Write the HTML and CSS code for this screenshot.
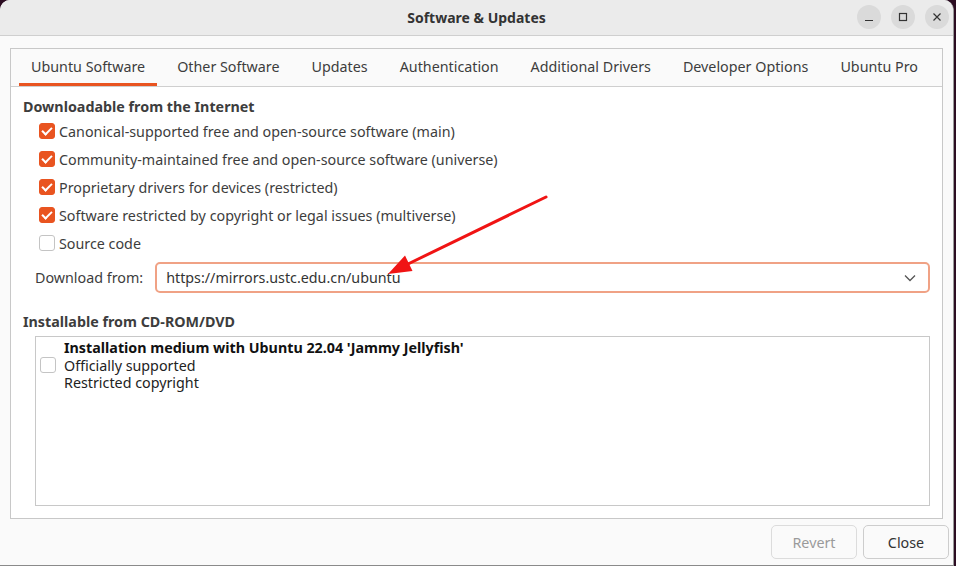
FILE: index.html
```html
<!DOCTYPE html>
<html>
<head>
<meta charset="utf-8">
<link rel="stylesheet" href="styles.css">
</head>
<body>
<div class="window">
  <header class="titlebar">
    <div class="title">Software &amp; Updates</div>
    <div class="wbtns">
      <span class="wbtn"><svg width="10" height="10" viewBox="0 0 10 10"><path d="M1 8.5h8" stroke="#333" stroke-width="1.2"/></svg></span>
      <span class="wbtn"><svg width="10" height="10" viewBox="0 0 10 10"><rect x="1.5" y="1.5" width="7" height="7" fill="none" stroke="#333" stroke-width="1.2"/></svg></span>
      <span class="wbtn"><svg width="10" height="10" viewBox="0 0 10 10"><path d="M1.5 1.5l7 7M8.5 1.5l-7 7" stroke="#333" stroke-width="1.2"/></svg></span>
    </div>
  </header>
  <main class="body">
    <section class="notebook">
      <nav class="tabs">
        <span class="tab active">Ubuntu Software</span>
        <span class="tab">Other Software</span>
        <span class="tab">Updates</span>
        <span class="tab">Authentication</span>
        <span class="tab">Additional Drivers</span>
        <span class="tab">Developer Options</span>
        <span class="tab">Ubuntu Pro</span>
      </nav>
      <div class="page">
        <h3 class="heading">Downloadable from the Internet</h3>
        <div class="checks">
          <label class="check"><span class="box on"></span>Canonical-supported free and open-source software (main)</label>
          <label class="check"><span class="box on"></span>Community-maintained free and open-source software (universe)</label>
          <label class="check"><span class="box on"></span>Proprietary drivers for devices (restricted)</label>
          <label class="check"><span class="box on"></span>Software restricted by copyright or legal issues (multiverse)</label>
          <label class="check"><span class="box"></span>Source code</label>
        </div>
        <div class="download">
          <span class="dl-label">Download from:</span>
          <div class="combo">
            <span>https://mirrors.ustc.edu.cn/ubuntu</span>
            <svg width="12" height="8" viewBox="0 0 12 8"><path d="M1 1.5l5 5 5-5" fill="none" stroke="#555" stroke-width="1.3"/></svg>
          </div>
        </div>
        <h3 class="heading cd">Installable from CD-ROM/DVD</h3>
        <div class="listbox">
          <div class="cdrow">
            <span class="box"></span>
            <div class="cdtext">
              <strong>Installation medium with Ubuntu 22.04 'Jammy Jellyfish'</strong>
              <span>Officially supported</span>
              <span>Restricted copyright</span>
            </div>
          </div>
        </div>
      </div>
    </section>
    <footer class="actions">
      <button class="btn disabled">Revert</button>
      <button class="btn">Close</button>
    </footer>
  </main>
  <svg class="arrow" width="956" height="566" viewBox="0 0 956 566">
    <line x1="546" y1="197" x2="408" y2="264" stroke="#f01414" stroke-width="3" stroke-linecap="round"/>
    <polygon points="388,274 405,255.5 412.5,271" fill="#f01414"/>
  </svg>
</div>
</body>
</html>
```
FILE: styles.css
```css
html, body {
  margin: 0;
  padding: 0;
  background: #2c0d22;
}
body {
  font-family: "Noto Sans", "DejaVu Sans", sans-serif;
  font-size: 14.3px;
  color: #3d3d3d;
  width: 956px;
  height: 566px;
  overflow: hidden;
  position: relative;
}
.window {
  width: 953px;
  height: 565px;
  background: #fafafa;
  border-right: 1px solid #9a9a9a;
  border-bottom: 1px solid #8a8a8a;
  border-radius: 10px 10px 0 0;
  overflow: hidden;
  display: flex;
  flex-direction: column;
}
.titlebar {
  height: 35px;
  background: #ebebeb;
  border-bottom: 1px solid #cfcfcf;
  position: relative;
  display: flex;
  align-items: center;
  justify-content: center;
  flex-shrink: 0;
}
.title {
  font-weight: bold;
  color: #333;
  font-size: 14px;
}
.wbtns {
  position: absolute;
  right: 4px;
  top: 5px;
  display: flex;
  gap: 10px;
}
.wbtn {
  width: 24px;
  height: 24px;
  border-radius: 50%;
  background: #dadada;
  display: flex;
  align-items: center;
  justify-content: center;
}
.body {
  flex: 1;
  display: flex;
  flex-direction: column;
  padding: 12px 10px 0 10px;
}
.notebook {
  height: 469px;
  width: 931px;
  border: 1px solid #c8c8c8;
  background: #fff;
  display: flex;
  flex-direction: column;
}
.tabs {
  height: 37px;
  border-bottom: 1px solid #cfcfcf;
  background: #fafafa;
  display: flex;
  padding-left: 4px;
}
.tab {
  margin: 0 4px;
  padding: 1px 12px 0 12px;
  display: flex;
  align-items: center;
  color: #3d3d3d;
  border-bottom: 3px solid transparent;
}
.tab.active {
  border-bottom-color: #e95420;
}
.page {
  padding: 10px 12px 0 12px;
  display: flex;
  flex-direction: column;
}
.heading {
  margin: 0;
  font-size: 14.3px;
  font-weight: bold;
  color: #3d3d3d;
  height: 20px;
  line-height: 20px;
}
.checks {
  display: flex;
  flex-direction: column;
  padding-left: 16px;
  margin-top: 0;
}
.check {
  height: 28px;
  display: flex;
  align-items: center;
  gap: 4px;
}
.box {
  width: 14px;
  height: 14px;
  border: 1px solid #c4c4c4;
  border-radius: 3px;
  background: #fff;
  flex-shrink: 0;
  position: relative;
}
.box.on {
  background: #e95420;
  border-color: #e95420;
}
.box.on::after {
  content: "";
  position: absolute;
  left: 4px;
  top: 1px;
  width: 4px;
  height: 8px;
  border: solid #fff;
  border-width: 0 2px 2px 0;
  transform: rotate(45deg);
}
.download {
  display: flex;
  align-items: center;
  margin-top: 5px;
  padding-left: 12px;
  gap: 12px;
}
.combo {
  flex: 1;
  height: 27px;
  border: 2px solid #f0a285;
  border-radius: 5px;
  display: flex;
  align-items: center;
  justify-content: space-between;
  padding: 0 12px 0 9px;
  color: #333;
}
.heading.cd {
  margin-top: 19px;
}
.listbox {
  margin: 4px 0 0 12px;
  height: 168px;
  border: 1px solid #c8c8c8;
  background: #fff;
}
.cdrow {
  display: flex;
  align-items: center;
  padding: 2px 4px;
  gap: 8px;
}
.cdtext {
  display: flex;
  flex-direction: column;
  line-height: 17.5px;
  color: #222;
}
.cdtext strong {
  color: #111;
}
.actions {
  display: flex;
  justify-content: flex-end;
  gap: 6px;
  margin-top: 6px;
  margin-right: -6px;
}
.btn {
  width: 86px;
  height: 34px;
  border: 1px solid #cdcdcd;
  border-radius: 5px;
  background: #fafafa;
  font-family: inherit;
  font-size: 14.3px;
  color: #333;
}
.btn.disabled {
  color: #9a9a9a;
  border-color: #dcdcdc;
}
.arrow {
  position: absolute;
  left: 0;
  top: 0;
  pointer-events: none;
}
```
